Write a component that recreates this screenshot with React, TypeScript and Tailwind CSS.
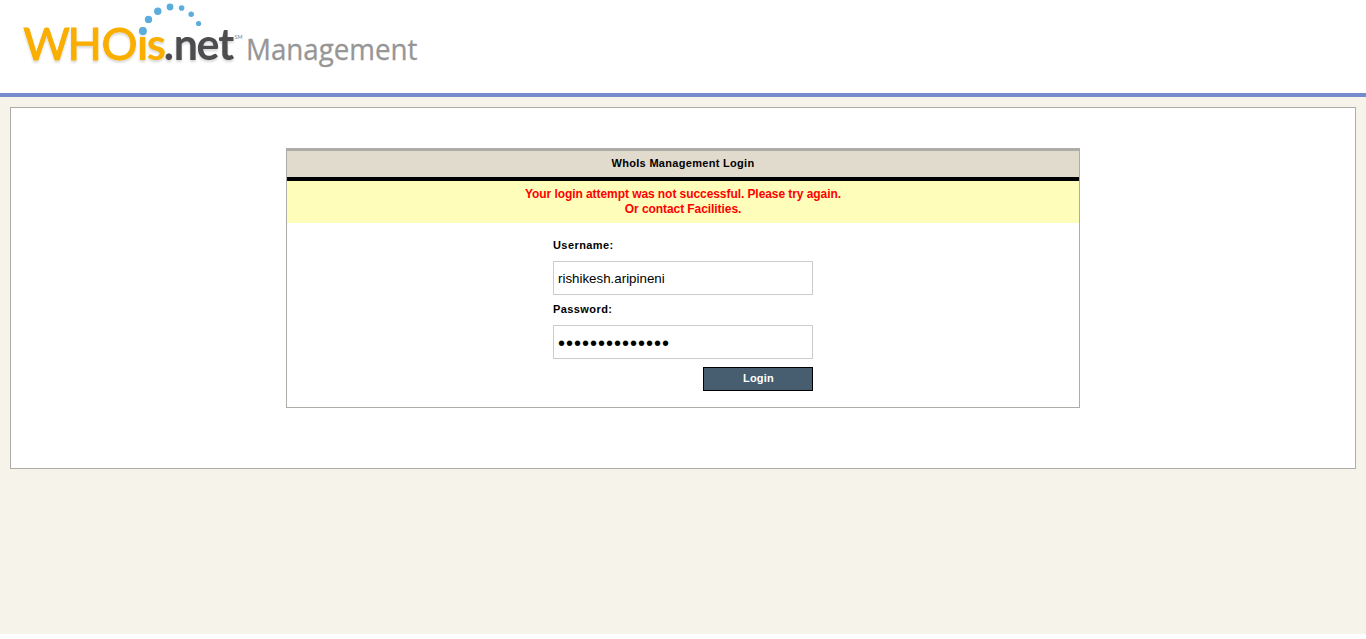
import { useState } from "react";

const dots = [
  { x: 143, y: 31, r: 3.9 },
  { x: 148.5, y: 19.4, r: 3.7 },
  { x: 157.8, y: 11.2, r: 3.7 },
  { x: 170, y: 7, r: 3.4 },
  { x: 181.6, y: 8, r: 2.8 },
  { x: 191.2, y: 14.2, r: 2.7 },
  { x: 198.6, y: 23.5, r: 2.6 },
];

function Logo() {
  return (
    <svg width="440" height="93" viewBox="0 0 440 93" className="block" role="img" aria-label="WHOis.net Management">
      <defs>
        <filter id="soft" x="-5%" y="-20%" width="110%" height="150%">
          <feDropShadow dx="0" dy="2" stdDeviation="1.2" floodColor="#000" floodOpacity="0.16" />
        </filter>
      </defs>
      <text filter="url(#soft)" fontFamily="Lato, sans-serif" y="59.7" fontSize="45">
        <tspan x="23.3 67.6 101.4" fill="#f9ae06" stroke="#f9ae06" strokeWidth="1">WHO</tspan>
        <tspan x="137 146.8" fill="#f9ae06" fontSize="44" fontWeight="700">is</tspan>
        <tspan x="163.8 173.8 196.6 218.3" fill="#4d4d4f" fontSize="43" fontWeight="700">.net</tspan>
      </text>
      <g fill="#5aaddc">
        {dots.map((d) => (
          <circle key={d.x} cx={d.x} cy={d.y} r={d.r} />
        ))}
      </g>
      <text x="234.5" y="39" fontSize="5.4" fill="#6f7f8c" fontFamily="Lato, sans-serif">SM</text>
      <text x="246" y="60" fontSize="28.5" fill="#969696" stroke="#969696" strokeWidth="0.3" fontFamily="'Open Sans', sans-serif" textLength="171.5" lengthAdjust="spacingAndGlyphs">
        Management
      </text>
    </svg>
  );
}

export default function App() {
  const [username, setUsername] = useState("rishikesh.aripineni");
  const [password, setPassword] = useState("abcdefghijklmn");

  return (
    <div className="flex h-[634px] flex-col bg-[#f6f3ea] font-['Liberation_Sans',Arial,sans-serif] text-[11px] text-black">
      <header className="h-[97px] shrink-0 border-b-4 border-[#748bcd] bg-white">
        <Logo />
      </header>
      <main className="mx-2.5 mt-2.5 h-[362px] border border-[#aeaca6] bg-white pt-10">
        <section className="mx-auto h-[260px] w-[794px] border border-t-[3px] border-[#aeaca6]">
          <h1 className="h-[30px] border-b-4 border-black bg-[#e1dbcd] text-center text-[11px] leading-[25px] font-bold tracking-[0.3px]">
            WhoIs Management Login
          </h1>
          <p className="h-[42px] bg-[#fffdba] pt-[6px] text-center text-[12px] leading-[15px] font-bold tracking-[-0.07px] text-[#f00]">
            Your login attempt was not successful. Please try again.
            <br />
            Or contact Facilities.
          </p>
          <form className="mx-auto flex w-[260px] flex-col pt-4" onSubmit={(e) => e.preventDefault()}>
            <label htmlFor="username" className="h-[22px] leading-[13px] font-bold tracking-[0.42px]">Username:</label>
            <input
              id="username"
              value={username}
              onChange={(e) => setUsername(e.target.value)}
              className="h-[34px] border border-[#ccc] px-1 text-[13.33px] outline-none"
            />
            <label htmlFor="password" className="mt-2 h-[22px] leading-[13px] font-bold tracking-[0.42px]">Password:</label>
            <input
              id="password"
              type="password"
              value={password}
              onChange={(e) => setPassword(e.target.value)}
              className="h-[34px] border border-[#ccc] px-1 pt-0.5 text-[20px] tracking-[1px] outline-none"
            />
            <button type="submit" className="mt-2 h-6 w-[110px] self-end border border-black bg-[#475d70] pb-0.5 pl-px font-bold tracking-[0.2px] text-white">
              Login
            </button>
          </form>
        </section>
      </main>
    </div>
  );
}
